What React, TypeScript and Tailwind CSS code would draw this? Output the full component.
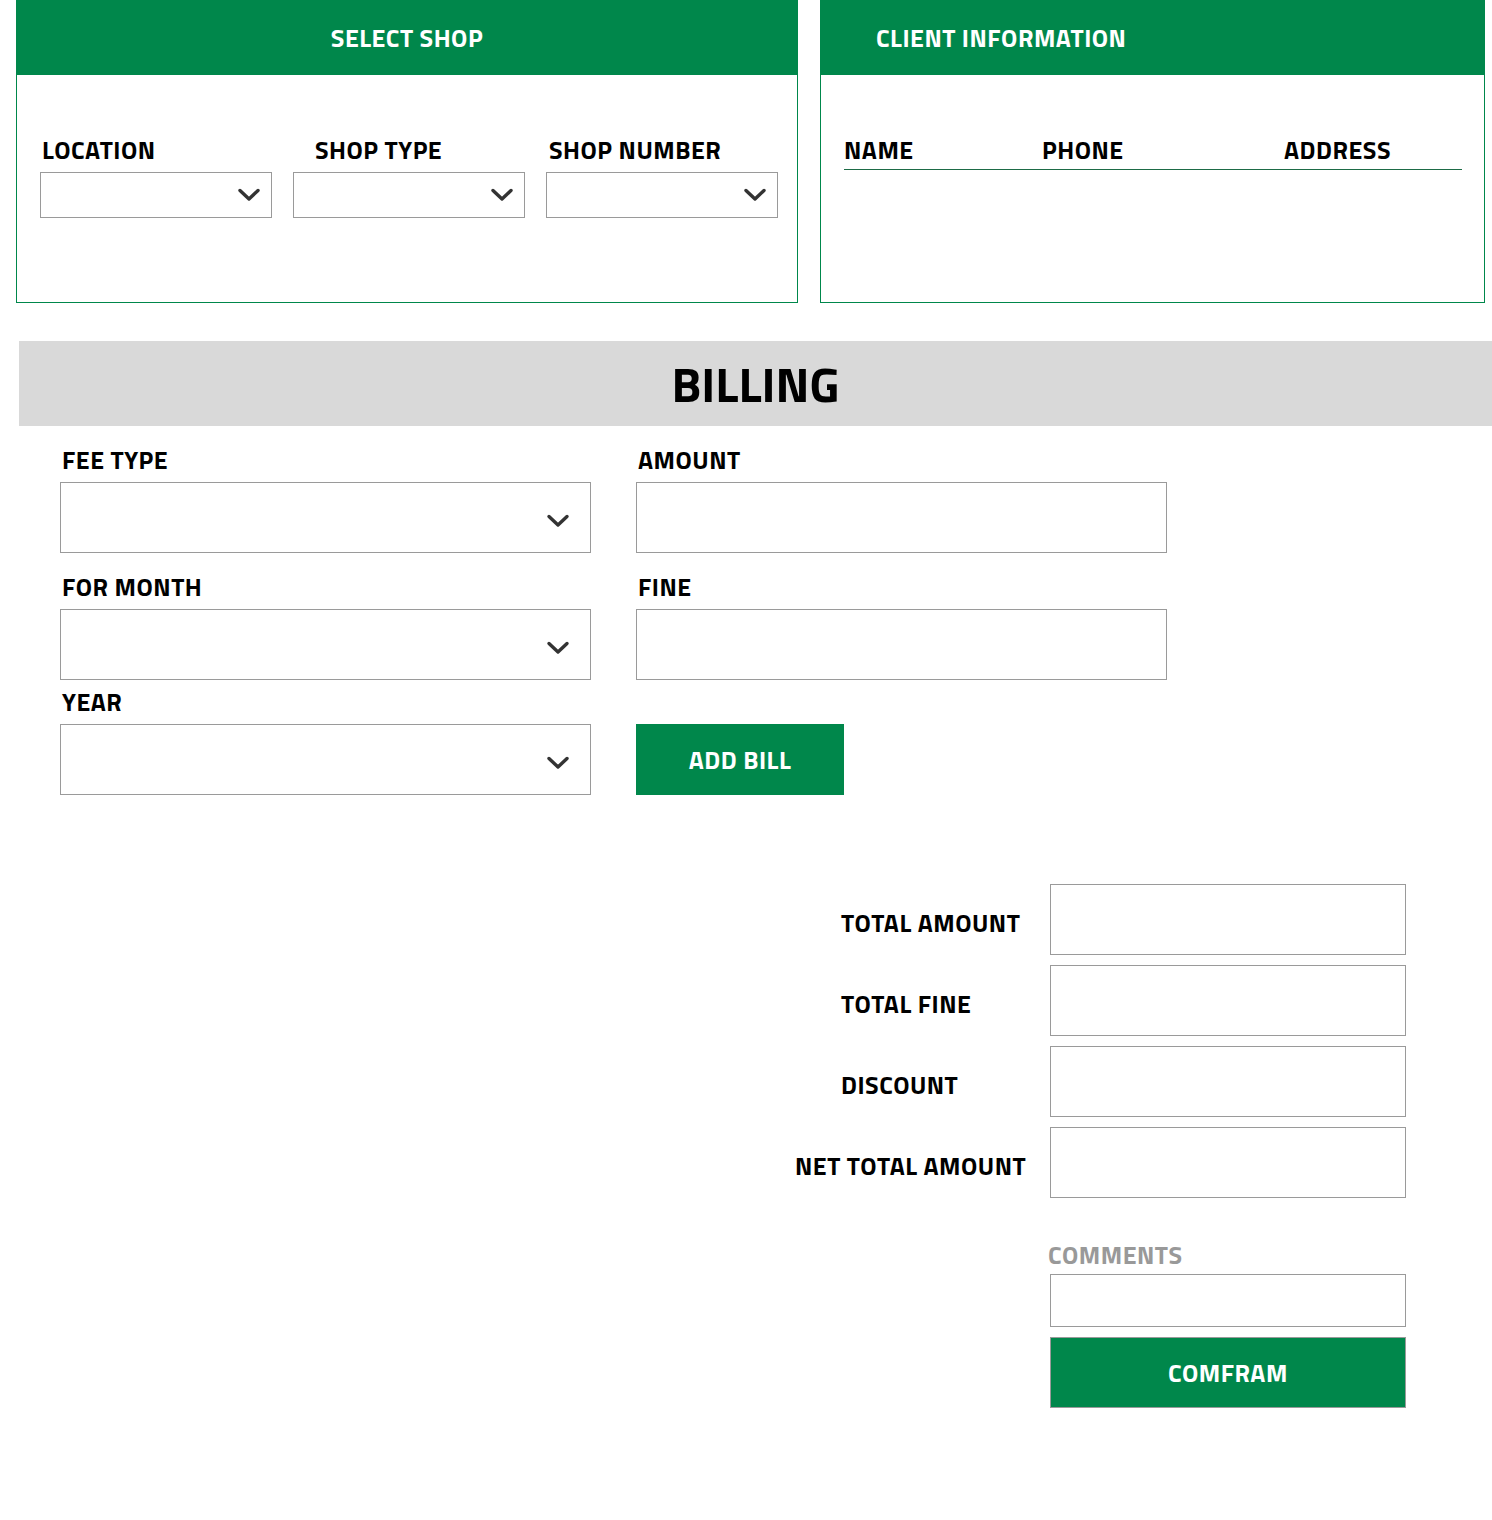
import React from "react";

const font = { fontFamily: "'Titillium Web', Roboto, 'Open Sans', sans-serif" };

const Chevron = () => (
  <svg width={24} height={16} viewBox="0 0 24 16" fill="none" className="shrink-0">
    <polyline
      points="3,3.5 12,12 21,3.5"
      stroke="#333333"
      strokeWidth={3.4}
      strokeLinecap="round"
      strokeLinejoin="round"
    />
  </svg>
);

const SmallSelect = () => (
  <div className="flex h-[46px] w-[232px] items-center justify-end border border-[#9a9a9a] bg-white pr-[10px]">
    <Chevron />
  </div>
);

const BigSelect = () => (
  <div className="flex h-[71px] w-[531px] items-center justify-end border border-[#9a9a9a] bg-white pr-[20px] pt-[6px]">
    <Chevron />
  </div>
);

const Input = ({ w = "w-[531px]", h = "h-[71px]" }: { w?: string; h?: string }) => (
  <div className={`${w} ${h} border border-[#9a9a9a] bg-white`} />
);

const Label = ({ children, className = "" }: { children: React.ReactNode; className?: string }) => (
  <div className={`h-[30px] whitespace-nowrap text-[25px] font-bold leading-[30px] tracking-[0.5px] text-black ${className}`}>
    {children}
  </div>
);

const TotalRow = ({ label, wide = false }: { label: string; wide?: boolean }) => (
  <div className="flex items-center">
    <div
      className={`whitespace-nowrap pt-[6px] text-[25px] font-bold leading-[30px] tracking-[0.5px] text-black ${
        wide ? "-ml-[46px] w-[255px]" : "w-[209px]"
      }`}
    >
      {label}
    </div>
    <Input w="w-[356px]" />
  </div>
);

export default function App() {
  return (
    <div className="min-h-[1520px] w-[1492px] bg-white" style={font}>
      {/* top cards */}
      <div className="flex gap-[22px] pl-[16px]">
        <div className="flex h-[303px] w-[782px] flex-col border border-t-0 border-[#00874b]">
          <div className="flex h-[75px] items-center justify-center bg-[#00874b] pt-[2px] text-[25px] font-bold tracking-[0.5px] text-white">
            SELECT SHOP
          </div>
          <div className="flex gap-[21px] pl-[23px] pt-[60px]">
            <div className="flex flex-col">
              <Label className="ml-[2px] mb-[7px]">LOCATION</Label>
              <SmallSelect />
            </div>
            <div className="flex flex-col">
              <Label className="ml-[22px] mb-[7px]">SHOP TYPE</Label>
              <SmallSelect />
            </div>
            <div className="flex flex-col">
              <Label className="ml-[3px] mb-[7px]">SHOP NUMBER</Label>
              <SmallSelect />
            </div>
          </div>
        </div>

        <div className="flex h-[303px] w-[665px] flex-col border border-t-0 border-[#00874b]">
          <div className="flex h-[75px] items-center bg-[#00874b] pt-[2px] pl-[55px] text-[25px] font-bold tracking-[0.5px] text-white">
            CLIENT INFORMATION
          </div>
          <div className="ml-[23px] mr-[22px] mt-[60px] flex border-b border-[#1d6b46]">
            <Label className="w-[198px] mb-[4px]">NAME</Label>
            <Label className="w-[242px] mb-[4px]">PHONE</Label>
            <Label className="mb-[4px]">ADDRESS</Label>
          </div>
        </div>
      </div>

      {/* billing */}
      <div className="ml-[19px] mt-[38px] flex h-[85px] items-center justify-center bg-[#d9d9d9] text-[49px] font-bold text-black">
        BILLING
      </div>

      <div className="ml-[60px] mt-[19px] flex flex-col">
        <div className="flex gap-[45px]">
          <div className="flex flex-col">
            <Label className="ml-[2px] mb-[7px]">FEE TYPE</Label>
            <BigSelect />
          </div>
          <div className="flex flex-col">
            <Label className="ml-[2px] mb-[7px]">AMOUNT</Label>
            <Input />
          </div>
        </div>
        <div className="mt-[19px] flex gap-[45px]">
          <div className="flex flex-col">
            <Label className="ml-[2px] mb-[7px]">FOR MONTH</Label>
            <BigSelect />
          </div>
          <div className="flex flex-col">
            <Label className="ml-[2px] mb-[7px]">FINE</Label>
            <Input />
          </div>
        </div>
        <div className="mt-[7px] flex items-end gap-[45px]">
          <div className="flex flex-col">
            <Label className="ml-[2px] mb-[7px]">YEAR</Label>
            <BigSelect />
          </div>
          <button className="flex h-[71px] w-[208px] items-center justify-center bg-[#00874b] pt-[2px] text-[25px] font-bold tracking-[0.5px] text-white">
            ADD BILL
          </button>
        </div>
      </div>

      {/* totals */}
      <div className="mt-[89px] flex flex-col items-end gap-[10px] pr-[86px]">
        <TotalRow label="TOTAL AMOUNT" />
        <TotalRow label="TOTAL FINE" />
        <TotalRow label="DISCOUNT" />
        <TotalRow label="NET TOTAL AMOUNT" wide />
      </div>

      <div className="mt-[43px] flex flex-col items-end pr-[86px]">
        <div className="w-[356px]">
          <div className="-ml-[2px] h-[30px] text-[25px] font-bold leading-[28px] tracking-[0.5px] text-[#999999]">COMMENTS</div>
          <div className="mt-[3px] h-[53px] w-[356px] border border-[#9a9a9a] bg-white" />
          <button className="mt-[10px] flex h-[71px] w-[356px] items-center justify-center border border-[#9a9a9a] bg-[#00874b] pt-[3px] text-[25px] font-bold tracking-[0.5px] text-white">
            COMFRAM
          </button>
        </div>
      </div>
    </div>
  );
}
